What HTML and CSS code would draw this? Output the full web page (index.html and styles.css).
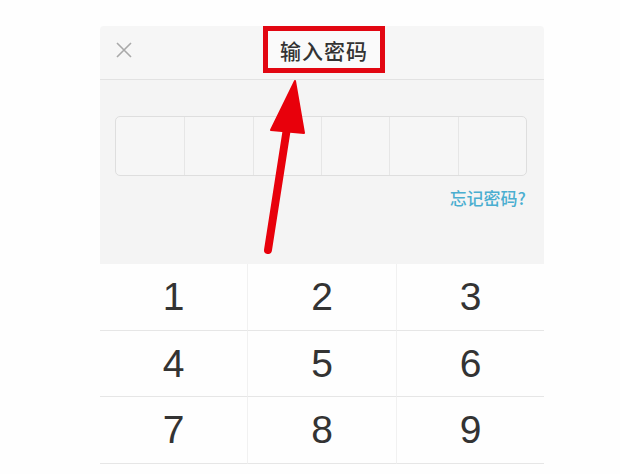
FILE: index.html
```html
<!DOCTYPE html>
<html lang="zh-CN">
<head>
<meta charset="utf-8">
<title>输入密码</title>
<link rel="stylesheet" href="styles.css">
</head>
<body>
<div class="dialog">
  <div class="header">
    <span class="close">
      <svg width="18" height="18" viewBox="0 0 18 18"><path d="M2 2L16 16M16 2L2 16" stroke="#a9a9a9" stroke-width="1.6" fill="none"/></svg>
    </span>
    <span class="title">输入密码</span>
  </div>
  <div class="body">
    <div class="pwd">
      <div class="cell"></div><div class="cell"></div><div class="cell"></div>
      <div class="cell"></div><div class="cell"></div><div class="cell"></div>
    </div>
    <div class="forgot">忘记密码?</div>
  </div>
  <div class="keypad">
    <div class="key">1</div><div class="key">2</div><div class="key">3</div>
    <div class="key">4</div><div class="key">5</div><div class="key">6</div>
    <div class="key">7</div><div class="key">8</div><div class="key">9</div>
  </div>
</div>
<svg class="arrow" width="620" height="474" viewBox="0 0 620 474">
  <path d="M287 128L268 250" stroke="#e8000b" stroke-width="8" stroke-linecap="round" fill="none"/>
  <path d="M295 81L271 130L304 133Z" fill="#e8000b" stroke="#e8000b" stroke-width="2" stroke-linejoin="round"/>
</svg>
</body>
</html>
```
FILE: styles.css
```css
html, body {
  margin: 0;
  padding: 0;
  background: #fefefe;
}
body {
  width: 620px;
  height: 474px;
  overflow: hidden;
  position: relative;
  font-family: "Liberation Sans", "Noto Sans CJK SC", sans-serif;
}
.dialog {
  margin: 26px 0 0 100px;
  width: 444px;
}
.header {
  height: 53px;
  background: #f6f6f6;
  border-bottom: 1px solid #e2e2e2;
  border-top-left-radius: 4px;
  border-top-right-radius: 4px;
  display: flex;
  align-items: flex-start;
  position: relative;
}
.close {
  position: absolute;
  left: 15px;
  top: 15px;
  width: 18px;
  height: 18px;
}
.close svg { display: block; }
.title {
  margin-left: 163px;
  width: 112px;
  height: 37px;
  border: 5px solid #e20712;
  background: #fafafa;
  display: flex;
  align-items: center;
  justify-content: center;
  font-family: "Noto Sans CJK SC", sans-serif;
  font-size: 21px;
  font-weight: 500;
  color: #333;
  letter-spacing: 1px;
}
.body {
  height: 184px;
  background: #f4f4f4;
  padding: 36px 17px 0 15px;
  box-sizing: border-box;
}
.pwd {
  height: 60px;
  box-sizing: border-box;
  border: 1px solid #dedede;
  border-radius: 5px;
  background: #f6f6f6;
  display: grid;
  grid-template-columns: repeat(6, 1fr);
}
.cell {
  border-left: 1px solid #e6e6e6;
}
.cell:first-child { border-left: none; }
.forgot {
  margin-top: 11px;
  text-align: right;
  padding-right: 1px;
  font-family: "Noto Sans CJK SC", sans-serif;
  font-size: 17px;
  font-weight: 500;
  color: #4aaed0;
  line-height: 22px;
}
.keypad {
  display: grid;
  grid-template-columns: 147px 149px 148px;
  grid-template-rows: 67px 66px 67px;
  background: #fefefe;
}
.key {
  border-bottom: 1px solid #e6e6e6;
  border-left: 1px solid #f1f1f1;
  display: flex;
  align-items: center;
  justify-content: center;
  font-size: 39px;
  color: #333;
}
.key:nth-child(3n+1) { border-left: none; }
.arrow {
  position: absolute;
  left: 0;
  top: 0;
  pointer-events: none;
}
```
